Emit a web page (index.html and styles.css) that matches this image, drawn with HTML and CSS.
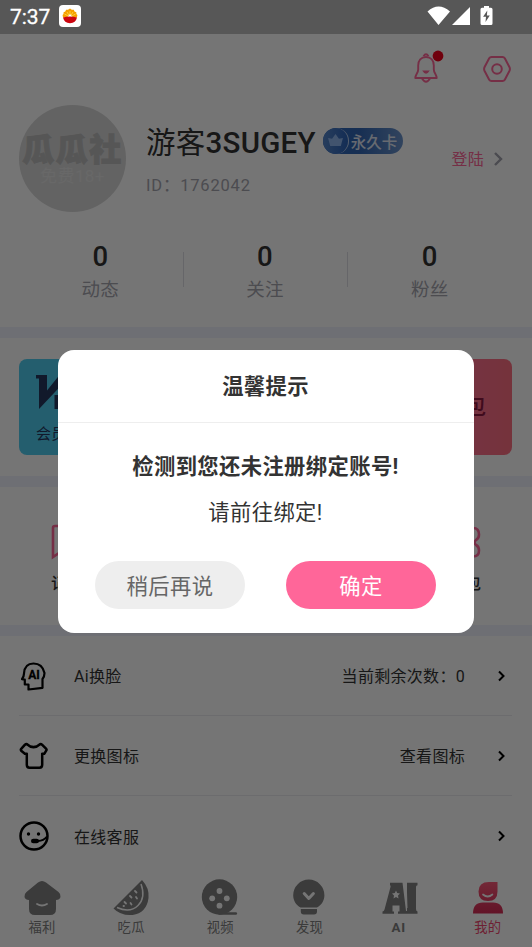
FILE: index.html
```html
<!DOCTYPE html>
<html lang="zh-CN">
<head>
<meta charset="utf-8">
<meta name="viewport" content="width=device-width, initial-scale=1">
<title>我的</title>
<link rel="stylesheet" href="styles.css">
</head>
<body>
<header class="status">
  <span class="clock">7:37</span>
  <svg class="app-icon" viewBox="0 0 22 22"><rect width="22" height="22" rx="4" fill="#fff"/><path d="M4 12.5 3.6 10l.9-.9.1-1.9 1.7-.8.8-1.7 1.9.1L11 3.6l1.8 1.2 2-.1.7 1.7 1.8.8.1 1.9 1 .9-.5 2.5z" fill="#f5a000"/><path d="M11 6v6M8 7l3 5 3-5M5.5 9l5.5 3 5.500-3" stroke="#ffd94a" stroke-width=".8" fill="none"/><path d="M8 12.500 11 9l3 3.500z" fill="#fff"/><path d="M4 12.500q7-2.200 14 0-1.200 5.500-7 5.700-5.800-.2-7-5.700" fill="#cc0610"/></svg>
  <svg class="signals" viewBox="0 0 68 22"><path d="M.500 5.500Q11.500-4.500 23 5.500L11.500 19zM25 19 43 1v18z" fill="#fff"/><path d="M57 0h5v1.800h2q1.500 0 1.500 1.500v14.200q0 1.500-1.500 1.500h-9q-1.500 0-1.500-1.500V3.300q0-1.500 1.500-1.500h2z" fill="#fff"/><path d="m60.300 4.500-4.200 6.300h2.900l-.5 5.200 4.300-6.600h-2.900z" fill="#575757"/></svg>
</header>

<main class="page">
  <div class="tools">
    <svg class="bell" viewBox="0 0 30 36"><g fill="none" stroke="#ff6699" stroke-width="1.900" stroke-linejoin="round"><path d="M5.200 19.500v-4c0-5 2.900-8.500 7.800-8.500s7.800 3.500 7.800 8.500v4c0 3.500 2.900 5 2.900 8.500H2.300c0-3.500 2.900-5 2.900-8.500z"/><path d="M10.500 6.200q2.500-4 5 0M9 28.500q4 6.500 8 0"/></g><path d="M9.200 20.500h7.600q-3.800 6.500-7.600 0" fill="#ff6699"/><circle cx="25" cy="6" r="5.400" fill="#f5001d"/></svg>
    <svg class="gear" viewBox="0 0 28 28"><g fill="none" stroke="#ff6699" stroke-width="2" stroke-linejoin="round"><path d="M8.500 2h11q1.500 0 2.300 1.300l4.600 8.700q1 2 0 4l-4.600 8.700q-.8 1.300-2.300 1.300h-11q-1.500 0-2.300-1.300L1.600 16q-1-2 0-4l4.600-8.700Q7 2 8.500 2z"/><circle cx="14" cy="14" r="4.800"/></g></svg>
  </div>

  <section class="profile">
    <div class="avatar"><b>瓜瓜社</b><span>免费18+</span></div>
    <div class="identity">
      <div class="name-line">
        <h1>游客<span>3SUGEY</span></h1>
        <div class="badge"><i><svg viewBox="0 0 16 14"><path d="M0 4.200 4.300 5 8 0l3.700 5L16 4.200 13.700 13H2.300z" fill="#91b8ef"/></svg></i>永久卡</div>
      </div>
      <p>ID：1762042</p>
    </div>
    <div class="login">登陆<svg viewBox="0 0 9 14"><path d="m1 1 6 6-6 6" fill="none" stroke="#a3a3ae" stroke-width="2.400"/></svg></div>
  </section>

  <section class="stats">
    <div><b>0</b><span>动态</span></div>
    <div><b>0</b><span>关注</span></div>
    <div><b>0</b><span>粉丝</span></div>
  </section>

  <section class="cards">
    <div class="card vip">
      <svg viewBox="0 0 62 34"><path d="M0 0h11v15.500L23.500 0H35L3 34V3.500H0zM18.500 20h10v14h-10z" fill="#26385f"/></svg>
      <span>会员中心</span>
    </div>
    <div class="card wallet">钱包</div>
  </section>

  <section class="shortcuts">
    <div><svg viewBox="0 0 34 36"><path d="M3 33V4q0-2 2-2h24q2 0 2 2v23q0 2-2 2H9z" fill="none" stroke="#ff6699" stroke-width="2.600"/></svg><span>记录</span></div>
    <div><svg viewBox="0 0 34 36"><path d="M8 4h17q6 0 6 6.500 0 4-3 5.500-3 2.500 0 5 3 1.500 3 5.500 0 6-6 6H8q-5 0-5-5V9q0-5 5-5z" fill="none" stroke="#ff6699" stroke-width="2.600"/></svg><span>卡包</span></div>
  </section>

  <section class="menu">
    <div class="row">
      <svg class="lead" viewBox="0 0 30 30"><path d="M9.500 28.500v-5H5.800v-4.800L3 18.200q2-3 2-5.700Q5.600 2.500 14.500 2.500T25.500 12q0 3.500-2 6v8.800z" fill="none" stroke="#000" stroke-width="2.200" stroke-linejoin="round"/><text x="9.200" y="17.500">AI</text></svg>
      <span>Ai换脸</span><em>当前剩余次数：0</em>
      <svg class="go" viewBox="0 0 7 12"><path d="m1 1.500 4.500 4.500L1 10.500" fill="none" stroke="#000" stroke-width="2"/></svg>
    </div>
    <div class="row">
      <svg class="lead" viewBox="0 0 30 30"><path d="M8 3.200Q14.500 9 21 3.200q1-.4 2 .5l4 4q1 1 .2 2l-1.500 2.500q-.7 1-2.500.5v11q0 3-2.800 3H10.600q-2.800 0-2.800-3v-11q-1.800.5-2.500-.5L2.200 9.700q-.8-1 .2-2l3.600-4q1-.9 2-.5z" fill="none" stroke="#000" stroke-width="2.500" stroke-linejoin="round"/></svg>
      <span>更换图标</span><em>查看图标</em>
      <svg class="go" viewBox="0 0 7 12"><path d="m1 1.500 4.500 4.500L1 10.500" fill="none" stroke="#000" stroke-width="2"/></svg>
    </div>
    <div class="row">
      <svg class="lead" viewBox="0 0 30 30"><circle cx="15" cy="15" r="13.500" fill="none" stroke="#000" stroke-width="2.500"/><circle cx="9.500" cy="13" r="1.700"/><circle cx="19.500" cy="13" r="1.700"/><path d="M28 15.500q-3.500 4.500-9 4.500h-5" fill="none" stroke="#000" stroke-width="2"/><rect x="12" y="17.700" width="8" height="4.600" rx="2.300"/></svg>
      <span>在线客服</span>
      <svg class="go" viewBox="0 0 7 12"><path d="m1 1.500 4.500 4.500L1 10.500" fill="none" stroke="#000" stroke-width="2"/></svg>
    </div>
  </section>
</main>

<nav class="tabs">
  <div><svg viewBox="0 0 38 38"><path d="M19 2q2 0 4 1.500L35.500 13q2.500 2 2 5-.8 3-4.500 3v9q0 6-6 6H12q-6 0-6-6v-9q-3.700 0-4.500-3-.5-3 2-5L15 3.500Q17 2 19 2z" fill="#808080"/><path d="M14 25q5 3 10 0" stroke="#fff" stroke-width="1.800" stroke-linecap="round" fill="none"/></svg><span>福利</span></div>
  <div><svg viewBox="0 0 38 38"><path d="M1.500 29.500 30 1q7.500 8 6.500 18-2 15-16 17-11.500 1-19-6.500z" fill="#808080"/><path d="M5 28.500q13 6 21-2T29 5" fill="none" stroke="#fff" stroke-width="1.500"/><path d="m23 12 1.500 1.500M18 17l1.500 1.500M24 18l1 1.500M12.500 23l1.500 1.500M18.500 24l1 1.500M11.500 27h.5" stroke="#fff" stroke-width="1.800" stroke-linecap="round"/></svg><span>吃瓜</span></div>
  <div><svg viewBox="0 0 38 38"><circle cx="18.500" cy="18" r="17.700" fill="#808080"/><path d="M18.500 34.500h16.300" stroke="#808080" stroke-width="2.600" stroke-linecap="round"/><g fill="#fff"><circle cx="18.500" cy="12" r="2.900"/><circle cx="11.200" cy="19.300" r="2.900"/><circle cx="25.800" cy="19.300" r="2.900"/><circle cx="18.500" cy="26.700" r="2.900"/></g></svg><span>视频</span></div>
  <div><svg viewBox="0 0 38 38"><path d="M10.500 28.500C6 26 3.200 21.500 3.200 16.200a15.600 15.600 0 0 1 31.200 0c0 5.300-2.900 9.800-7.400 12.300zM10.800 30h16.200v2.500q0 3-3 3H13.800q-3 0-3-3z" fill="#808080"/><path d="m14.200 14.500 4.600 5 4.600-5" fill="none" stroke="#fff" stroke-width="3" stroke-linecap="round" stroke-linejoin="round"/></svg><span>发现</span></div>
  <div><svg viewBox="0 0 38 38"><path d="M10 3.800h12.500L26 32h1V3.800h10.500v2.400q-1.500.3-1.500 1.800v22q0 2 1.500 2.500v2.200H18v-2.200h1.500v-6h-7v6H14v2.200H2.500v-2.200q1.500 0 2-2L10.500 8q.5-1.800-.5-1.800z" fill="#808080"/><path d="M26.300 6.500 27 29" stroke="#fff" stroke-width="1"/><path d="m16 11.500 1.200 2.600 2.800.4-2 2 .5 3-2.500-1.500-2.500 1.500.5-3-2-2 2.800-.4z" fill="#fff"/></svg><span class="latin">AI</span></div>
  <div class="active"><svg viewBox="0 0 38 38"><defs><linearGradient id="me" x2="0" y2="1"><stop stop-color="#fa5878"/><stop offset="1" stop-color="#d52c55"/></linearGradient></defs><path d="M20 3h8.500v9.500q0 9.500-9.500 9.500t-9.500-9.500T20 3zM4 34.500q0-11 10-11h10q10 0 10 11z" fill="url(#me)"/><path d="M14 15.500q4.700 4 9.400 0" fill="none" stroke="#fff" stroke-width="1.700" stroke-linecap="round"/></svg><span>我的</span></div>
</nav>

<div class="scrim">
  <div class="dialog">
    <h2>温馨提示</h2>
    <div class="message"><strong>检测到您还未注册绑定账号!</strong><p>请前往绑定!</p></div>
    <div class="actions"><button class="later">稍后再说</button><button class="confirm">确定</button></div>
  </div>
</div>
</body>
</html>
```
FILE: styles.css
```css
* { box-sizing: border-box; margin: 0; padding: 0; }
html, body { height: 947px; overflow: hidden; }
body {
  position: relative;
  display: flex;
  flex-direction: column;
  background: #fff;
  color: #333;
  font-family: Roboto, "Noto Sans CJK SC", sans-serif;
  letter-spacing: .25px;
}
svg { display: block; flex: none; overflow: visible; }
em, i { font-style: normal; }

.status {
  position: relative;
  z-index: 3;
  flex: none;
  height: 34px;
  padding: 0 37.500px 0 10px;
  display: flex;
  align-items: center;
  background: #575757;
  color: #fff;
}
.clock { width: 49px; font-size: 21px; letter-spacing: -.1px; font-weight: 400; line-height: 32px; -webkit-text-stroke: .3px #fff; }
.app-icon { width: 22px; height: 22px; margin-top: -2px; }
.signals { width: 68px; height: 22px; margin-left: auto; margin-top: -1px; }

.page { flex: 1; min-height: 0; overflow: hidden; }
.tools { height: 71px; padding: 16px 21px 0 0; display: flex; justify-content: flex-end; }
.bell { width: 30px; height: 36px; margin-right: 40px; }
.gear { width: 28px; height: 28px; margin-top: 5px; }

.profile { height: 108px; padding: 0 28px 0 19px; display: flex; align-items: flex-start; }
.avatar {
  width: 107px;
  height: 107px;
  border-radius: 50%;
  background: #d8d8d8;
  display: flex;
  flex-direction: column;
  align-items: center;
  white-space: nowrap;
}
.avatar b { margin-top: 29px; font-size: 32px; line-height: 32px; font-weight: 900; color: #bcbcbc; letter-spacing: 1.500px; -webkit-text-stroke: 1px #bcbcbc; }
.avatar span { margin-top: 1px; font-size: 17px; line-height: 19px; color: #e2e2e2; letter-spacing: .4px; }
.identity { margin: 20px 0 0 20px; }
.name-line { display: flex; align-items: center; height: 36px; }
h1 { font-size: 29.500px; line-height: 36px; font-weight: 400; white-space: nowrap; letter-spacing: .25px; }
h1 span { font-weight: 500; }
.badge {
  width: 80px;
  height: 26px;
  margin: -5px 0 0 7px;
  border-radius: 13px;
  display: flex;
  align-items: center;
  background: linear-gradient(90deg, #2d65bc, #3267b5 45%, #6c94cc);
  color: #e0e8f5;
  font-size: 15.500px;
  font-weight: 500;
  letter-spacing: 0;
  white-space: nowrap;
}
.badge i {
  flex: none;
  width: 26px;
  height: 26px;
  margin-right: 2px;
  border-radius: 50%;
  border-right: 1.300px solid #bcd0ef;
  background: linear-gradient(90deg, #5686c9, #2b62b9);
  display: grid;
  place-items: center;
}
.badge svg { width: 15px; height: 13px; }
.identity p { margin-top: 14px; font-size: 16.500px; line-height: 22px; color: #a6a6af; letter-spacing: .8px; }
.login { display: flex; align-items: center; gap: 10px; margin: 42px 1px 0 auto; font-size: 16px; line-height: 26px; color: #ff6699; }
.login svg { width: 9px; height: 14px; margin-top: -2px; }

.stats { height: 125px; border-bottom: 11px solid #f0f1fd; padding: 0 20px 0 18px; display: grid; grid-template-columns: repeat(3, 1fr); }
.stats > div { position: relative; padding-top: 28px; display: flex; flex-direction: column; align-items: center; }
.stats > div + div::before { content: ""; position: absolute; left: 0; top: 39px; height: 35px; width: 1px; background: #dfdfe5; }
.stats b { font-size: 27.500px; line-height: 32px; font-weight: 500; }
.stats span { margin-top: 4px; font-size: 18.500px; line-height: 27px; color: #a6a6af; }

.cards { height: 149px; padding: 21px 20px 21px 19px; display: flex; gap: 12px; border-bottom: 11px solid #f0f1fd; }
.card { flex: 1; height: 96px; border-radius: 8px; }
.vip { padding: 16px 17px; background: #4fcdef; color: #26385f; font-size: 15px; }
.vip svg { width: 62px; height: 34px; }
.vip span { display: block; margin-top: 14px; line-height: 22px; color: #26385f; }
.wallet { padding: 32px 26px 0 0; text-align: right; background: linear-gradient(90deg, #ff7aa6, #ff6f9a 65%, #ff6f82); color: #8b1840; font-size: 22px; line-height: 32px; font-weight: 500; letter-spacing: 0; }

.shortcuts { height: 149px; padding: 37px 50px 0; display: flex; justify-content: space-between; border-bottom: 11px solid #f0f1fd; }
.shortcuts div { width: 34px; display: flex; flex-direction: column; align-items: center; }
.shortcuts svg { width: 34px; height: 36px; }
.shortcuts span { margin-top: 13px; font-size: 16px; line-height: 22px; font-weight: 500; white-space: nowrap; letter-spacing: 0; }

.menu { padding: 0 20px 0 19px; }
.row { height: 80px; padding-right: 7px; display: flex; align-items: center; border-bottom: 1.500px solid #ececf0; font-size: 16px; line-height: 24px; }
.row:last-child { border: 0; }
.lead { width: 30px; height: 30px; margin-right: 25px; }
.lead text { font: 700 12px Roboto, sans-serif; letter-spacing: 0; stroke: #000; stroke-width: .3px; }
.go { width: 7px; height: 12px; margin-left: auto; }
.row span, .row em { padding-top: 3px; letter-spacing: .3px; }
.row em { margin-left: auto; }
.row em + .go { margin-left: 33px; }

.tabs { flex: none; height: 81px; margin: 0 -.4px 0 -2.600px; padding-top: 13px; display: grid; grid-template-columns: repeat(6, 1fr); background: #fff; }
.tabs div { display: flex; flex-direction: column; align-items: center; font-size: 13.300px; line-height: 22px; color: #808080; }
.tabs svg { width: 38px; height: 38px; }
.tabs .latin { font-weight: 700; letter-spacing: .8px; }
.tabs .active { color: #f0476f; }

.scrim { position: absolute; inset: 0; z-index: 2; display: flex; justify-content: center; align-items: flex-start; padding: 349.500px 1px 0 0; background: rgba(0, 0, 0, .54); }
.dialog { width: 416px; height: 283.500px; border-radius: 16px; background: #fff; text-align: center; overflow: hidden; }
h2 { height: 73px; border-bottom: 1.500px solid #eee; font-size: 21.300px; line-height: 73px; font-weight: 700; letter-spacing: .35px; }
.message { height: 138px; padding-top: 28px; font-size: 21.300px; line-height: 32px; letter-spacing: .4px; }
.message strong { font-weight: 700; }
.message p { margin-top: 14px; }
.actions { display: flex; justify-content: center; gap: 41px; }
button { width: 150px; height: 48px; border: 0; border-radius: 24px; font: inherit; font-size: 21.300px; letter-spacing: .4px; }
.later { background: #eee; color: #666; }
.confirm { background: #ff6699; color: #fff; }
```
